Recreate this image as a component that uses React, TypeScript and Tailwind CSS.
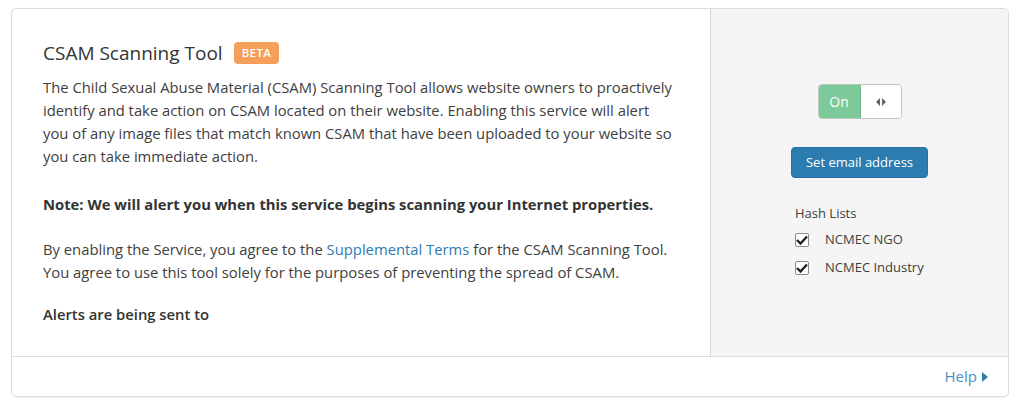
import React from "react";

function Check() {
  return (
    <span className="w-[14px] h-[14px] border border-[#8a8a8a] rounded-[2px] bg-white flex items-center justify-center shrink-0">
      <svg width="12" height="10" viewBox="0 0 12 10"><path d="M1 5 L4.5 8.5 L11 1.5" stroke="#222" strokeWidth="2.4" fill="none" /></svg>
    </span>
  );
}

export default function App() {
  return (
    <div className="w-[1024px] h-[403px] bg-white pt-[8px] pl-[11px]" style={{ fontFamily: '"Open Sans", "Noto Sans", sans-serif' }}>
      <div className="w-[998px] h-[389px] border border-[#dcdcdc] rounded-[5px] flex flex-col overflow-hidden shadow-[0_1px_1px_rgba(0,0,0,0.04)]">
        <div className="flex h-[348px] border-b border-[#dcdcdc]">
          <div className="w-[699px] border-r border-[#d6d6d6] pl-[31px] pr-[4px] pt-[31px] text-[#404040]">
            <div className="flex items-center gap-[11px]">
              <h1 className="text-[19px] leading-[26px] text-[#333]">CSAM Scanning Tool</h1>
              <span className="bg-[#f5a05a] text-white text-[11.5px] font-semibold rounded-[4px] px-[8px] leading-[22px] tracking-[0.4px]">BETA</span>
            </div>
            <p className="text-[14.8px] leading-[23px] mt-[10px] whitespace-nowrap">
              The Child Sexual Abuse Material (CSAM) Scanning Tool allows website owners to proactively<br />
              identify and take action on CSAM located on their website. Enabling this service will alert<br />
              you of any image files that match known CSAM that have been uploaded to your website so<br />
              you can take immediate action.
            </p>
            <p className="text-[14.8px] leading-[23px] mt-[25px] font-bold text-[#333] whitespace-nowrap">
              Note: We will alert you when this service begins scanning your Internet properties.
            </p>
            <p className="text-[14.8px] leading-[22.5px] mt-[22px] whitespace-nowrap">
              By enabling the Service, you agree to the <span className="text-[#2c7cb0]">Supplemental Terms</span> for the CSAM Scanning Tool.<br />
              You agree to use this tool solely for the purposes of preventing the spread of CSAM.
            </p>
            <p className="text-[14.8px] leading-[23px] mt-[20px] font-semibold text-[#333]">Alerts are being sent to</p>
          </div>
          <div className="flex-1 bg-[#f5f5f5] flex flex-col items-center pt-[75px]">
            <div className="flex h-[35px] w-[84px] rounded-[4px] border border-[#b9c9be] overflow-hidden">
              <div className="w-[42px] bg-[#7dc99a] border-r border-[#6ab98a] text-white text-[14px] flex items-center justify-center">On</div>
              <div className="flex-1 bg-white flex items-center justify-center">
                <svg width="10" height="8" viewBox="0 0 10 8">
                  <path d="M4 0 L0 4 L4 8 Z" fill="#666" />
                  <path d="M6 0 L10 4 L6 8 Z" fill="#666" />
                </svg>
              </div>
            </div>
            <button className="mt-[28px] h-[31px] px-[14px] bg-[#2c7cb0] text-white text-[13px] rounded-[4px] border border-[#286f9f]">Set email address</button>
            <div className="w-[129px] mt-[25px] text-[#404040] text-[13px]">
              <div className="leading-[20px]">Hash Lists</div>
              <div className="flex items-center mt-[7px] h-[20px]">
                <Check />
                <span className="ml-[16px] whitespace-nowrap">NCMEC NGO</span>
              </div>
              <div className="flex items-center mt-[8px] h-[20px]">
                <Check />
                <span className="ml-[16px] whitespace-nowrap">NCMEC Industry</span>
              </div>
            </div>
          </div>
        </div>
        <div className="flex-1 flex items-center justify-end pr-[20px]">
          <span className="text-[#4a90c6] text-[15px] flex items-center gap-[5px]">
            Help
            <svg width="6" height="10" viewBox="0 0 6 10"><path d="M0 0 L6 5 L0 10 Z" fill="#2c7cb0" /></svg>
          </span>
        </div>
      </div>
    </div>
  );
}
